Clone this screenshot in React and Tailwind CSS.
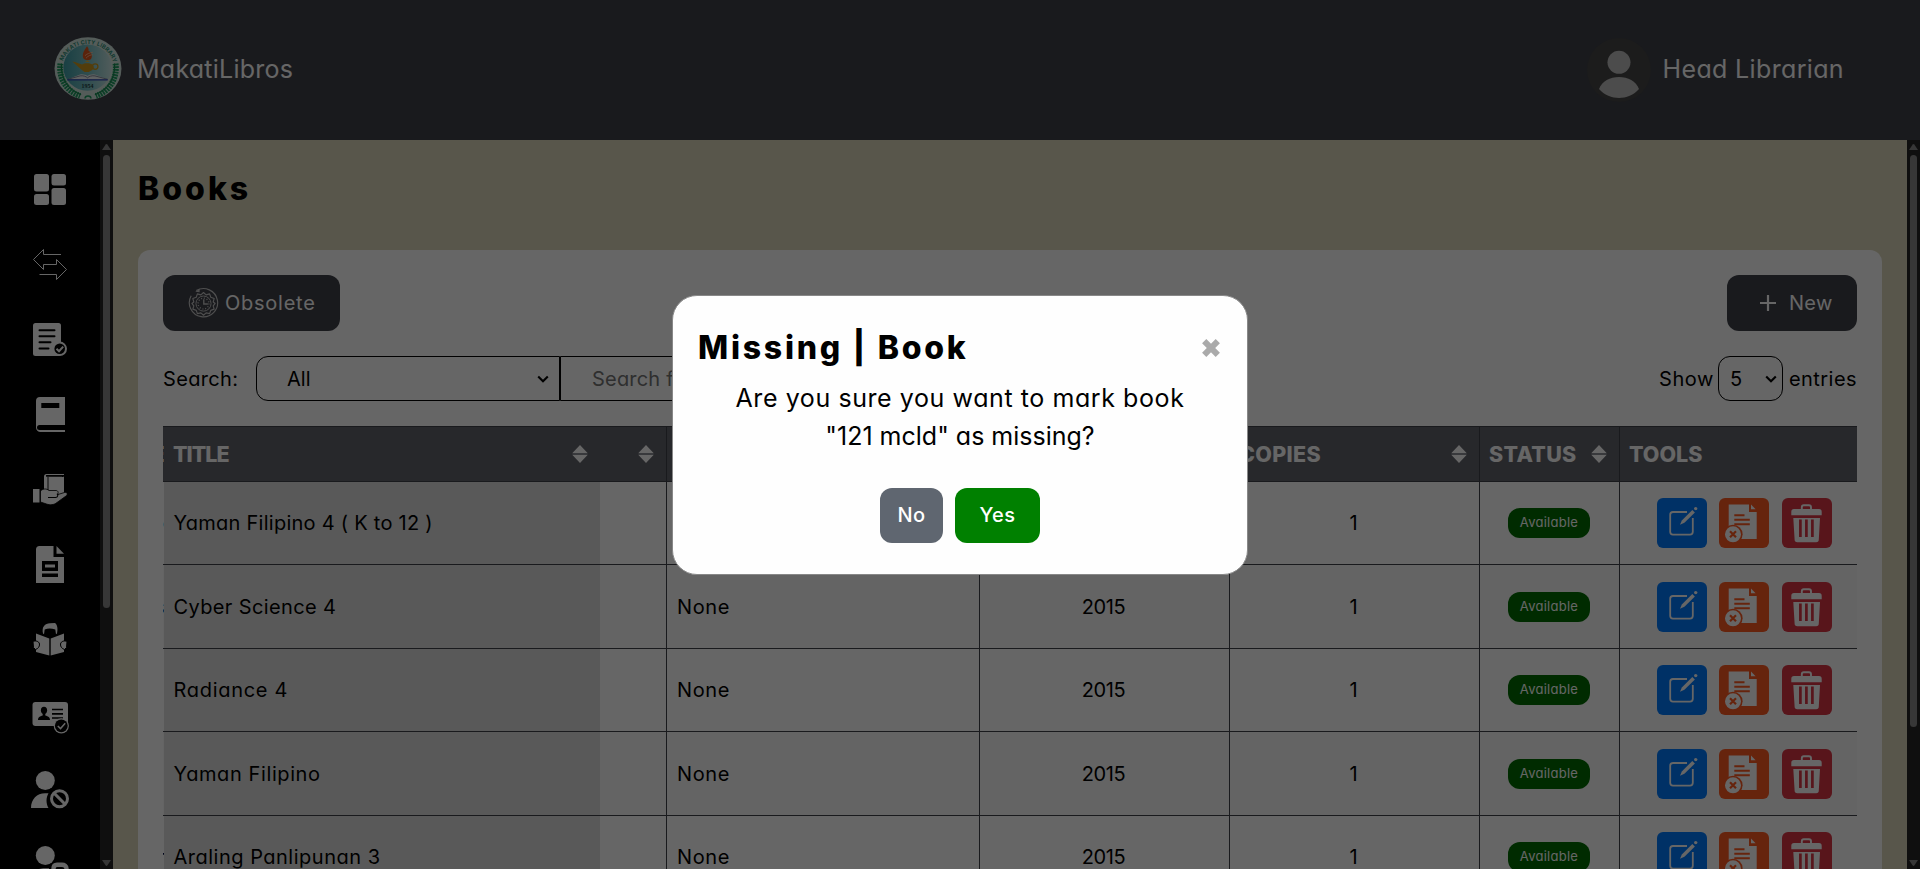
const DashboardIcon = () => (
  <>
    <rect x="4" y="4" width="15" height="17.5" rx="2.5" />
    <rect x="21.5" y="4" width="14.5" height="11.5" rx="2.5" />
    <rect x="4" y="24" width="15" height="11" rx="2.5" />
    <rect x="21.5" y="18" width="14.5" height="17" rx="2.5" />
  </>
);

const TransferIcon = () => (
  <path
    d="M31 9.5H13.5V4.5L3.5 14.5L13.5 24.5V19.5H26.5V14.5L36.5 24.5L26.5 34.5V29.5H9.5"
    fill="none"
    stroke="white"
    strokeWidth="1"
  />
);

const DocCheckIcon = () => (
  <>
    <rect x="3" y="3" width="28" height="33" rx="2.5" />
    <path d="M9.5 10.3H24.5M9.5 16.3H24.5M9.5 22.3H20.5M9.5 28.5H18.5" stroke="black" strokeWidth="2" strokeLinecap="round" />
    <circle cx="29.7" cy="28.8" r="7.3" />
    <circle cx="29.7" cy="28.8" r="5.3" fill="black" />
    <path d="M26.5 28.8L29 31.2L33.2 26.6" fill="none" stroke="white" strokeWidth="2" />
  </>
);

const BookIcon = () => (
  <>
    <path d="M10 2H35V37H10.5A4.5 4.5 0 0 1 6 32.5V6A4 4 0 0 1 10 2Z" />
    <path d="M35 30H9.5A2.3 2.3 0 0 0 9.5 35H35Z" fill="black" />
    <rect x="11.3" y="8" width="18" height="5" fill="black" />
  </>
);

const HandBookIcon = () => (
  <>
    <path d="M16.5 4H34V5H16.5A1 1 0 0 0 16.5 6.8H34V24H14V6.5A2.5 2.5 0 0 1 16.5 4Z" />
    <path d="M18 7V24M32.5 5V7" stroke="black" strokeWidth="0.9" />
    <rect x="3" y="19" width="6.5" height="13.5" />
    <path
      d="M10.5 21C13 18.5 16.5 18.3 19 20.5H26C28.5 20.5 28.8 23.5 27 24.8L34.5 22.5C37.5 21.8 38 24.5 36 26L27 32.5C24 35 20 35.3 16.5 34L10.5 32Z"
      stroke="black"
      strokeWidth="0.8"
    />
    <path d="M18 27.5H25.5C28 27.3 28.4 24.5 27 23.6" fill="none" stroke="black" strokeWidth="1.1" />
  </>
);

const FileIcon = () => (
  <>
    <path d="M9.5 1H23.5V12H34V38H6V4.5A3.5 3.5 0 0 1 9.5 1Z" />
    <path d="M26.5 1L34 8.8H26.5Z" />
    <path d="M12 16H28V26H12Z M15 19.5V22.5H25V19.5Z M12 28.5H28V32H12Z" fill="black" fillRule="evenodd" />
  </>
);

const ReaderIcon = () => (
  <>
    <path d="M13 13.5C11.5 7 15 3.3 20 3.3L25 3C27.5 5 28 9 27 13.5L26 14.3L25.3 9.5C21 8 18 8 14.7 9.5L14 14.3Z" />
    <path d="M6 13.5L19.3 18.5V35.5L6 32Z" />
    <path d="M34 13.5L20.7 18.5V35.5L34 32Z" />
    <path d="M3 21.5C5 20.3 9 21 9.5 24C9.7 27 8 28.5 5.5 29.5L3.5 27.5Z" stroke="black" strokeWidth="1" />
    <path d="M37 21.5C35 20.3 31 21 30.5 24C30.3 27 32 28.5 34.5 29.5L36.5 27.5Z" stroke="black" strokeWidth="1" />
  </>
);

const IdCardIcon = () => (
  <>
    <rect x="2.5" y="7" width="35.5" height="24" rx="3" />
    <ellipse cx="14" cy="15.3" rx="3.1" ry="3.6" fill="black" />
    <path d="M12.7 18H15.3V20.5C18 21.5 20 22 20 25H8C8 22 10 21.5 12.7 20.5Z" fill="black" />
    <path d="M22 14.5H33M22 18.8H33M22 23H33" stroke="black" strokeWidth="1.7" />
    <circle cx="31.3" cy="30.8" r="7.6" />
    <circle cx="31.3" cy="30.8" r="6.4" fill="black" />
    <path d="M27.8 31L30.5 33.6L35.2 28.2" fill="none" stroke="white" strokeWidth="1.5" />
  </>
);

const UserBanIcon = () => (
  <>
    <circle cx="15.3" cy="10.5" r="9.5" />
    <path d="M1 38C1 29 7 23.2 15 23.2H18.5C16 27.5 15.8 33 18.5 38Z" />
    <circle cx="29.5" cy="28.7" r="8" fill="none" stroke="white" strokeWidth="3" />
    <path d="M24.3 23.4L34.9 34" stroke="white" strokeWidth="3" />
  </>
);

const UserLockIcon = () => (
  <>
    <circle cx="15.3" cy="10.5" r="9.5" />
    <path d="M8 24.5C10 23.4 12 23.2 15 23.2H19V30H8Z" />
    <path d="M23.5 32V23.5C23.5 21 25 19.7 27 19.7H32C34.5 19.7 36.5 21 36.5 23.5V32" fill="none" stroke="white" strokeWidth="4.4" />
  </>
);

const NAV = [
  DashboardIcon,
  TransferIcon,
  DocCheckIcon,
  BookIcon,
  HandBookIcon,
  FileIcon,
  ReaderIcon,
  IdCardIcon,
  UserBanIcon,
  UserLockIcon,
];

function Logo() {
  return (
    <svg viewBox="0 0 68 64" className="mt-[-3px] h-[63px] w-[68px]">
      <defs>
        <linearGradient id="sky" x1="0" x2="1">
          <stop offset="0" stopColor="#3f9fa8" />
          <stop offset="0.55" stopColor="#7fc4c8" />
          <stop offset="1" stopColor="#c9e6e4" />
        </linearGradient>
        <path id="arc" d="M8.6 24.5 A26.8 25.6 0 0 1 59.4 24.5" />
      </defs>
      <ellipse cx="34" cy="32" rx="34" ry="31.8" fill="#d3e6df" />
      <ellipse cx="33.5" cy="31" rx="24.5" ry="23.5" fill="url(#sky)" />
      <text className="fill-[#2f8f78] font-['Inter'] text-[5.8px] font-bold">
        <textPath href="#arc" textLength="67">
          MAKATI CITY LIBRARY
        </textPath>
      </text>
      <path d="M6 27C4 42 12 55 26 60M62 27C64 42 56 55 42 60" fill="none" stroke="#1f9e62" strokeWidth="6" strokeDasharray="1.8 0.9" />
      <path d="M7 27C6 42 14 54 27 58.5M61 27C62 42 54 54 41 58.5" fill="none" stroke="#158a50" strokeWidth="1.2" />
      <path d="M31 62.5C31 59 37 59 37 62.5" fill="none" stroke="#1f9e62" strokeWidth="1.5" />
      <path d="M33 9.5C30 14 28 17 29 21C30 24 36 24.5 37.5 21.5C39 18 36.5 15 34.5 14C35 12 34 11 33 9.5Z" fill="#e2581f" />
      <path d="M31 19C33 17 36 16 39 15.5M32 21.5C34 19 37 18 39 18" stroke="#ffc29c" strokeWidth="0.8" fill="none" />
      <path d="M18 25C22 25.5 25 27.5 28 28C30 26 37 26 39 28.5C42 33 36 34.5 35 35.5H30.5C27 33.5 23 29 18 25Z" fill="#d09a1c" />
      <circle cx="41.3" cy="30" r="2.8" fill="none" stroke="#d09a1c" strokeWidth="1.3" />
      <path d="M31 25.5H36L33.5 23.5Z" fill="#e9b93c" />
      <path d="M13.5 43L26 38C29 37.5 32 38.5 33.5 39.5C35 38.5 38 37.5 41 38L54 43Z" fill="#eef3f3" />
      <path d="M13.5 43L26 39.5C29 39 32 40 33.5 41.5C35 40 38 39 41 39.5L54 43" fill="none" stroke="#555e78" strokeWidth="0.7" />
      <path d="M13 43.5H54" stroke="#3446b4" strokeWidth="1.3" />
      <text x="33.5" y="51.5" textAnchor="middle" className="fill-[#1c3c40] font-['Liberation_Serif'] text-[6px] font-bold">
        1954
      </text>
    </svg>
  );
}

function Scrollbar({ thumb }) {
  return (
    <div className="flex w-[13px] shrink-0 flex-col items-center bg-[#262626] pt-1 pb-[3px]">
      <svg viewBox="0 0 9 6" className="h-1.5 w-[9px] fill-[#8a8a8a]">
        <path d="M3.7 0.5Q4.5 -0.3 5.3 0.5L9 6H0Z" />
      </svg>
      <div className={`mt-[5px] w-[7px] rounded-full bg-[#8a8a8a] ${thumb}`} />
      <svg viewBox="0 0 9 6" className="mt-auto h-1.5 w-[9px] fill-[#8a8a8a]">
        <path d="M3.7 5.5Q4.5 6.3 5.3 5.5L9 0H0Z" />
      </svg>
    </div>
  );
}

const Sort = ({ className }) => (
  <svg viewBox="0 0 16 18" className={`h-[18px] w-4 shrink-0 fill-white ${className}`}>
    <path d="M8 0L15.8 8.2H0.2Z M8 18L15.8 9.8H0.2Z" />
    <rect x="1" y="8.2" width="14" height="1.6" fill="#8e9098" />
  </svg>
);

const Chevron = () => (
  <svg viewBox="0 0 12 8" className="h-2 w-3 shrink-0">
    <path d="M1.2 1.4L6 6.2L10.8 1.4" fill="none" stroke="black" strokeWidth="2.1" />
  </svg>
);

const EditIcon = () => (
  <svg viewBox="0 0 50 50" className="size-[50px]">
    <path d="M30 14H16A2.8 2.8 0 0 0 13.2 16.8V33.8A2.8 2.8 0 0 0 16 36.6H33A2.8 2.8 0 0 0 35.8 33.8V20" fill="none" stroke="white" strokeWidth="1.8" />
    <path d="M23 26.8L24.8 22.5L35.3 11.9L37.9 14.4L27.4 24.8Z" fill="white" />
    <circle cx="38.7" cy="10.6" r="1.7" fill="white" />
  </svg>
);

const FileRemoveIcon = () => (
  <svg viewBox="0 0 50 50" className="size-[50px]">
    <path d="M9.7 6.5H30V14H37.7V41H9.7Z" fill="white" />
    <path d="M32 6.5L36.6 11.3H32Z" fill="white" />
    <path d="M15.3 17.2H25.5M15.3 21.7H30.8M15.3 26.2H30.8" stroke="#ff5a22" strokeWidth="2" />
    <circle cx="14" cy="36.3" r="9.6" fill="#ff5a22" />
    <circle cx="14" cy="36.3" r="8" fill="white" />
    <path d="M11 33.3L17 39.3M17 33.3L11 39.3" stroke="#ff5a22" strokeWidth="2.2" />
  </svg>
);

const TrashIcon = () => (
  <svg viewBox="0 0 50 50" className="size-[50px]">
    <path d="M19.8 12V9.2A2 2 0 0 1 21.8 7.2H27A2 2 0 0 1 29 9.2V12" fill="none" stroke="white" strokeWidth="1.9" />
    <path d="M12 11H37A2.7 2.7 0 0 1 39.7 13.7V17.3H9.3V13.7A2.7 2.7 0 0 1 12 11Z" fill="white" />
    <path d="M11.3 20H38L36.8 41.5A2.7 2.7 0 0 1 34 44.2H15.3A2.7 2.7 0 0 1 12.6 41.5Z" fill="white" />
    <path d="M18.4 21.5V39M24.4 21.5V39M30.4 21.5V39" stroke="#dc3545" strokeWidth="2.7" />
  </svg>
);

const ObsoleteIcon = () => (
  <svg viewBox="0 0 32 32" className="h-8 w-[31px]" fill="none" stroke="#c4c4c4" strokeWidth="1">
    <path d="M8.5 3.2A14.6 14.6 0 1 1 3.3 8.5" strokeWidth="1.2" />
    <path d="M7.5 4.5L12 1.2V5Z" fill="#c4c4c4" stroke="none" />
    <path d="M16 5.2L18.7 7.6L22.3 6.6L23.5 10L27 11.4L26 14.9L28 16.5L26 19L27 22.3L23.5 23.6L22.3 27L18.7 26.2L16 28.6L13.3 26.2L9.7 27L8.5 23.6L5 22.3L6 19L4 16.5L6 14.9L5 11.4L8.5 10L9.7 6.6L13.3 7.6Z" strokeWidth="1.2" strokeLinejoin="round" />
    <circle cx="16" cy="16.6" r="7.8" />
    <circle cx="16" cy="16.6" r="5.6" strokeDasharray="1 1.9" strokeWidth="1.5" />
    <path d="M16.3 12V17H20.5" strokeWidth="1.4" />
  </svg>
);

const BOOKS = [
  { title: "Yaman Filipino 4 ( K to 12 )", track: "tracking-[0.26px]", h: "h-[83px]", prev: "o", shift: "-ml-[11px]" },
  { title: "Cyber Science 4", track: "tracking-[0.37px]", h: "h-[84px]", prev: "s", shift: "-ml-[9px]" },
  { title: "Radiance 4", track: "tracking-[0.7px]", h: "h-[83px]", prev: "", shift: "" },
  { title: "Yaman Filipino", track: "tracking-[0.6px]", h: "h-[84px]", prev: "", shift: "" },
  { title: "Araling Panlipunan 3", track: "tracking-[0.5px]", h: "h-[83px]", prev: "r", shift: "-ml-1.5" },
];

const COLS = "grid grid-cols-[504px_313px_250px_250px_140px_237px]";
const LINE = "border-[#40434a]";
const TH = "flex items-center border-r border-[#40434a] pl-[9px] text-[21.5px] font-extrabold";

function BooksTable() {
  return (
    <div className="w-[1694px]">
      <div className={`${COLS} ${LINE} h-14 border-y bg-[#62646c] text-white`}>
        <div className={`${TH} !pl-0`}>
          <span className="flex w-px overflow-hidden"><span className="-ml-[11.5px]">E</span></span>
          <div className="flex w-[436px] items-center justify-between pr-3 pl-[9px]">
            <span className="tracking-[-1px]">TITLE</span>
            <Sort />
          </div>
          <Sort className="ml-[38px]" />
        </div>
        <div className={`${TH} justify-end pr-3`}><Sort /></div>
        <div className={`${TH} justify-end pr-3`}><Sort /></div>
        <div className={`${TH} justify-between pr-3`}>
          <span className="tracking-[0.3px]">COPIES</span>
          <Sort />
        </div>
        <div className={`${TH} justify-between pr-3`}>
          <span className="tracking-[0.3px]">STATUS</span>
          <Sort />
        </div>
        <div className="flex items-center pl-[9px] text-[21.5px] font-extrabold">TOOLS</div>
      </div>
      {BOOKS.map((b, i) => (
        <div key={b.title} className={`${COLS} ${LINE} ${b.h} border-b ${i % 2 ? "bg-[#f9f9f9]" : "bg-white"}`}>
          <div className={`flex border-r ${LINE}`}>
            <span className="flex w-px items-center overflow-hidden"><span className={b.shift}>{b.prev}</span></span>
            <div className={`flex w-[436px] items-center bg-[#dfdfdf] pl-[9.5px] ${b.track}`}>{b.title}</div>
          </div>
          <div className={`flex items-center border-r pl-2.5 tracking-[0.6px] ${LINE}`}>None</div>
          <div className={`flex items-center justify-center border-r pr-0.5 tracking-[-0.4px] ${LINE}`}>2015</div>
          <div className={`flex items-center justify-center border-r pr-0.5 ${LINE}`}>1</div>
          <div className={`flex items-center justify-center border-r pr-0.5 ${LINE}`}>
            <span className="flex h-[30px] w-[82px] items-center justify-center rounded-xl bg-[#006c00] pl-px text-[13px] tracking-[0.25px] text-white">
              Available
            </span>
          </div>
          <div className="flex items-center pl-[37px]">
            <button className="size-[50px] rounded-md bg-[#007bff]"><EditIcon /></button>
            <button className="ml-3 size-[50px] rounded-md bg-[#ff5a22]"><FileRemoveIcon /></button>
            <button className="ml-[13px] size-[50px] rounded-md bg-[#dc3545]"><TrashIcon /></button>
          </div>
        </div>
      ))}
    </div>
  );
}

function MissingDialog() {
  return (
    <div className="fixed inset-0 flex items-center justify-center bg-black/60 pt-px">
      <div className="h-[280px] w-[576px] rounded-[25px] border border-[#888] bg-[#fefefe] px-[25px] pt-[25px]">
        <div className="flex h-[54px] items-center justify-between">
          <h2 className="text-[32px] font-extrabold tracking-[2.75px] whitespace-pre">Missing | Book</h2>
          <svg viewBox="0 0 18 18" className="mr-0.5 size-[18px]">
            <path d="M2.2 2.2L15.8 15.8M15.8 2.2L2.2 15.8" stroke="#aaa" strokeWidth="6" />
          </svg>
        </div>
        <p className="mt-[5px] text-center text-[25px] leading-[37.5px]">
          <span className="tracking-[0.58px]">Are you sure you want to mark book</span>
          <br />
          <span>&quot;121 mcld&quot; as missing?</span>
        </p>
        <div className="mt-[33px] flex justify-center gap-3 font-medium text-white">
          <button className="h-[55px] w-[63px] rounded-xl bg-[#5f6670] pb-px tracking-[0.4px]">No</button>
          <button className="h-[55px] w-[85px] rounded-xl bg-[#008000] pb-px tracking-[0.4px]">Yes</button>
        </div>
      </div>
    </div>
  );
}

export default function App() {
  return (
    <div className="flex h-[869px] flex-col overflow-hidden font-['Inter',sans-serif] text-[20px] text-black [font-feature-settings:'cv11']">
      <header className="flex h-[140px] shrink-0 items-center justify-between bg-[#3f4149] pr-[76px] pl-[54px] text-[25px] text-white">
        <div className="flex items-center gap-[15px]">
          <Logo />
          <span className="tracking-[0.25px]">MakatiLibros</span>
        </div>
        <div className="flex items-center gap-3">
          <svg viewBox="0 0 64 64" className="size-16">
            <circle cx="32" cy="32" r="32" fill="#464646" />
            <circle cx="32" cy="24.3" r="11.5" fill="#bdbdbd" />
            <path d="M12 51C15 43 23 39 32 39S49 43 52 51C47 57 39 60 32 60S17 57 12 51Z" fill="#bdbdbd" />
          </svg>
          <span className="tracking-[0.35px]">Head Librarian</span>
        </div>
      </header>
      <div className="flex min-h-0 flex-1">
        <nav className="flex w-[100px] shrink-0 flex-col items-center overflow-hidden bg-black pt-3">
          {NAV.map((Icon, i) => (
            <a key={i} className="flex h-[75px] shrink-0 items-center justify-center">
              <svg viewBox="0 0 40 40" className="size-10" fill="white">
                <Icon />
              </svg>
            </a>
          ))}
        </nav>
        <Scrollbar thumb="h-[453px]" />
        <main className="min-w-0 flex-1 overflow-hidden bg-[#ddd8bb] px-[25px] pt-[25px]">
          <h1 className="flex h-[47px] items-center text-[32px] font-extrabold tracking-[3px]">Books</h1>
          <section className="mt-[38px] rounded-xl bg-white p-[25px]">
            <div className="flex justify-between text-white">
              <button className="flex h-14 w-[177px] items-center rounded-xl bg-[#3f4149] pl-[25px]">
                <ObsoleteIcon />
                <span className="ml-1.5 tracking-[0.75px]">Obsolete</span>
              </button>
              <button className="flex h-14 w-[130px] items-center rounded-xl bg-[#3f4149] pl-[33px]">
                <svg viewBox="0 0 16 16" className="size-4 stroke-white stroke-[2.2]">
                  <path d="M8 0.5V15.5M0.5 8H15.5" strokeLinecap="round" />
                </svg>
                <span className="ml-[13px] tracking-[0.3px]">New</span>
              </button>
            </div>
            <div className="mt-[25px] flex h-[45px] items-center justify-between">
              <div className="flex h-full items-center">
                <span className="w-[93px] tracking-[0.35px]">Search:</span>
                <div className="flex h-full w-[304px] items-center justify-between rounded-l-xl border border-black pr-[10px] pl-[30px]">
                  <span>All</span>
                  <Chevron />
                </div>
                <div className="flex h-full w-[304px] items-center rounded-r-xl border border-black pl-[31px] tracking-[0.2px] text-[#757575]">
                  Search for...
                </div>
              </div>
              <div className="flex h-full items-center">
                <span className="tracking-[0.55px]">Show</span>
                <div className="mr-1.5 ml-1 flex h-full w-[65px] items-center justify-between rounded-xl border border-black pr-[5px] pl-[11px]">
                  <span>5</span>
                  <Chevron />
                </div>
                <span className="tracking-[0.45px]">entries</span>
              </div>
            </div>
            <div className="mt-[25px]">
              <BooksTable />
            </div>
          </section>
        </main>
        <Scrollbar thumb="h-[572px]" />
      </div>
      <MissingDialog />
    </div>
  );
}
